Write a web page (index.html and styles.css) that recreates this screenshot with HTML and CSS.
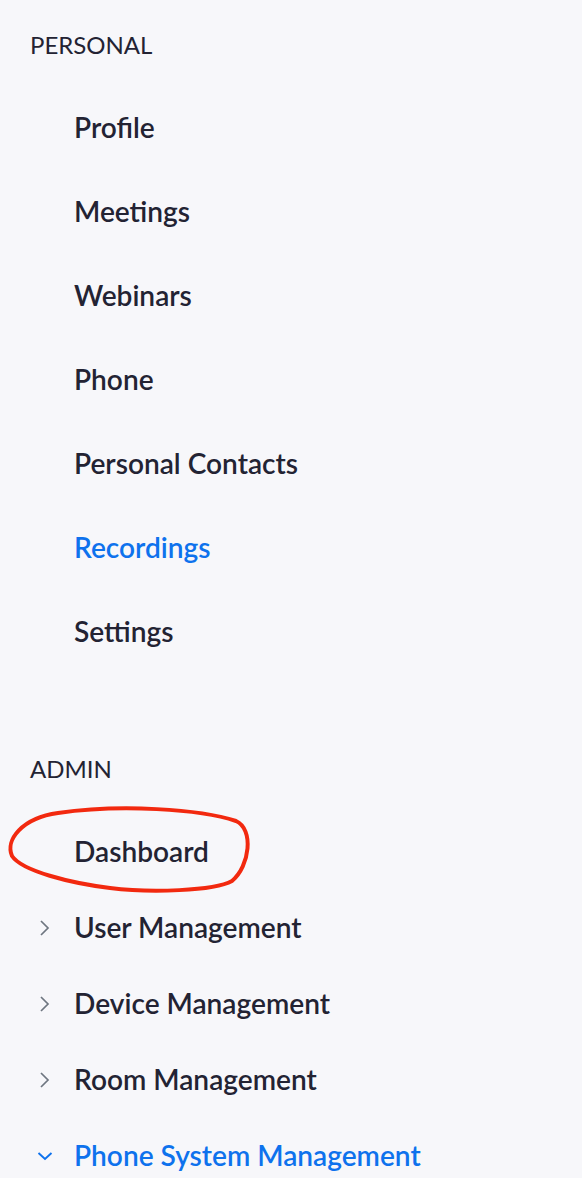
FILE: index.html
```html
<!DOCTYPE html>
<html>
<head>
<meta charset="utf-8">
<link rel="stylesheet" href="styles.css">
</head>
<body>
<nav class="sidebar">
  <div class="section-title">PERSONAL</div>
  <ul class="menu personal">
    <li class="item">Profile</li>
    <li class="item">Meetings</li>
    <li class="item">Webinars</li>
    <li class="item">Phone</li>
    <li class="item">Personal Contacts</li>
    <li class="item active">Recordings</li>
    <li class="item">Settings</li>
  </ul>
  <div class="section-title admin-title">ADMIN</div>
  <ul class="menu admin">
    <li class="item row"><span class="chev"></span>Dashboard</li>
    <li class="item row"><span class="chev"><svg width="14" height="16" viewBox="0 0 14 16"><path d="M2 1 L9 8 L2 15" fill="none" stroke="#6e7680" stroke-width="1.7"/></svg></span>User Management</li>
    <li class="item row"><span class="chev"><svg width="14" height="16" viewBox="0 0 14 16"><path d="M2 1 L9 8 L2 15" fill="none" stroke="#6e7680" stroke-width="1.7"/></svg></span>Device Management</li>
    <li class="item row"><span class="chev"><svg width="14" height="16" viewBox="0 0 14 16"><path d="M2 1 L9 8 L2 15" fill="none" stroke="#6e7680" stroke-width="1.7"/></svg></span>Room Management</li>
    <li class="item row active"><span class="chev down"><svg width="16" height="16" viewBox="0 0 16 16"><path d="M1.5 5 L8 11 L14.5 5" fill="none" stroke="#0e72ed" stroke-width="1.9"/></svg></span>Phone System Management</li>
  </ul>
  <svg class="annotation" width="582" height="1178" viewBox="0 0 582 1178">
    <path d="M58 813 C 120 804, 200 809, 236 821 C 254 829, 250 866, 232 881 C 214 891, 150 893, 110 888 C 70 883, 22 871, 12 856 C 5 840, 22 818, 58 813 Z" fill="none" stroke="#f2290f" stroke-width="4" stroke-linejoin="round"/>
  </svg>
</nav>
</body>
</html>
```
FILE: styles.css
```css
html, body {
  margin: 0;
  padding: 0;
  background: #f7f7fa;
}
body {
  font-family: "Lato", "Liberation Sans", sans-serif;
  color: #232333;
}
.sidebar {
  position: relative;
  width: 582px;
  height: 1178px;
  overflow: hidden;
  padding-top: 30px;
  box-sizing: border-box;
}
.section-title {
  font-size: 24px;
  line-height: 30px;
  padding-left: 30px;
  font-weight: 400;
}
.menu {
  list-style: none;
  margin: 0;
  padding: 0;
}
.personal {
  margin-top: 25px;
}
.personal .item {
  font-size: 28.1px;
  line-height: 84px;
  font-weight: 600;
  padding-left: 74px;
}
.admin-title {
  margin-top: 81px;
}
.admin {
  margin-top: 29px;
}
.admin .item {
  font-size: 28.1px;
  line-height: 76px;
  font-weight: 600;
}
.row {
  display: flex;
  align-items: center;
  height: 76px;
}
.chev {
  width: 74px;
  padding-left: 39px;
  box-sizing: border-box;
  display: flex;
  align-items: center;
  padding-top: 2px;
}
.chev.down {
  padding-left: 37px;
}
.chev svg {
  display: block;
}
.item.active {
  color: #0e72ed;
}
.annotation {
  position: absolute;
  left: 0;
  top: 0;
  pointer-events: none;
}
```
